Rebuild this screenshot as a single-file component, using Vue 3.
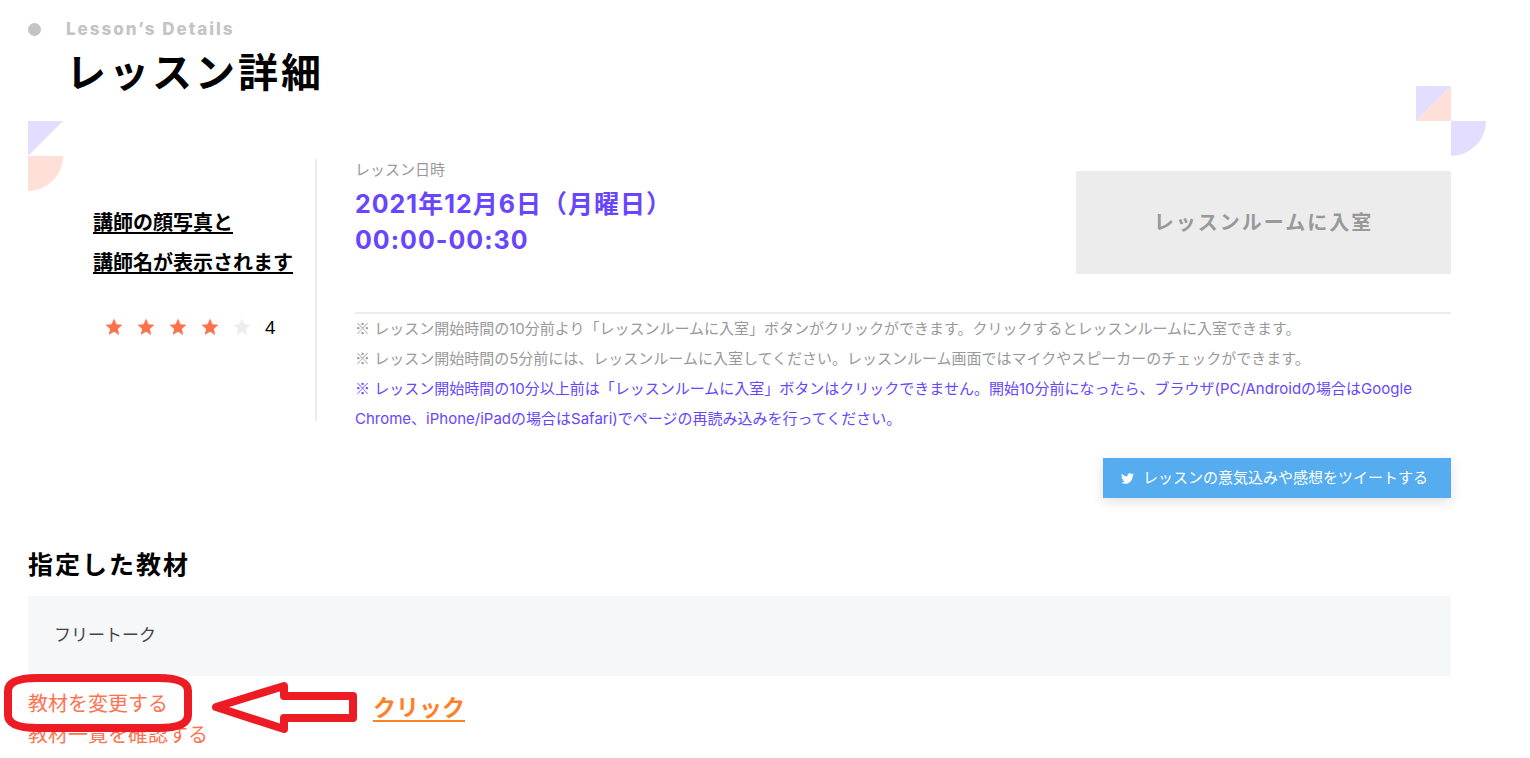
<script setup>
const notes = [
  { text: 'レッスン開始時間の10分前より「レッスンルームに入室」ボタンがクリックができます。クリックするとレッスンルームに入室できます。', strong: false },
  { text: 'レッスン開始時間の5分前には、レッスンルームに入室してください。レッスンルーム画面ではマイクやスピーカーのチェックができます。', strong: false },
  { text: 'レッスン開始時間の10分以上前は「レッスンルームに入室」ボタンはクリックできません。開始10分前になったら、ブラウザ(PC/Androidの場合はGoogle Chrome、iPhone/iPadの場合はSafari)でページの再読み込みを行ってください。', strong: true },
]
const rating = 4
</script>

<template>
  <main class="page">
    <header class="title">
      <span class="dot"></span>
      <div>
        <p class="eyebrow">Lesson’s Details</p>
        <h1>レッスン詳細</h1>
      </div>
    </header>

    <section class="lesson">
      <svg class="deco deco-left" viewBox="0 0 35 70" aria-hidden="true">
        <path d="M0 0H35L0 35Z" fill="#e3deff" />
        <path d="M0 35H35A35 35 0 0 1 0 70Z" fill="#ffe0d9" />
      </svg>
      <svg class="deco deco-right" viewBox="0 0 70 70" aria-hidden="true">
        <path d="M0 0H35L0 35Z" fill="#e3deff" />
        <path d="M35 0V35H0Z" fill="#ffe0d9" />
        <path d="M35 35H70A35 35 0 0 1 35 70Z" fill="#e3deff" />
      </svg>

      <div class="teacher">
        <p class="teacher-name">講師の顔写真と<br />講師名が表示されます</p>
        <div class="rating">
          <svg v-for="n in 5" :key="n" class="star" :class="{ off: n > rating }" viewBox="0 0 18 18" aria-hidden="true">
            <path d="M9 0.5L11.4 6.2L17.6 6.7L12.9 10.8L14.3 17L9 13.7L3.7 17L5.1 10.8L0.4 6.7L6.6 6.2Z" />
          </svg>
          <span class="score">{{ rating }}</span>
        </div>
      </div>

      <div class="detail">
        <div class="summary">
          <div>
            <p class="label">レッスン日時</p>
            <p class="date">2021年12月6日（月曜日）<br />00:00-00:30</p>
          </div>
          <button class="enter" type="button" disabled>レッスンルームに入室</button>
        </div>
        <div class="notes">
          <p v-for="note in notes" :key="note.text" :class="{ strong: note.strong }"><span class="mark">※</span> {{ note.text }}</p>
        </div>
      </div>
    </section>

    <div class="share">
      <a class="tweet" href="#">
        <svg viewBox="0 0 24 24" aria-hidden="true">
          <path d="M23.95 4.57a10 10 0 0 1-2.82.77 4.96 4.96 0 0 0 2.16-2.72c-.95.55-2 .95-3.13 1.18a4.92 4.92 0 0 0-8.38 4.48C7.69 8.1 4.07 6.13 1.64 3.16a4.82 4.82 0 0 0-.67 2.48c0 1.71.87 3.21 2.19 4.1a4.9 4.9 0 0 1-2.23-.62v.06a4.92 4.92 0 0 0 3.95 4.83 5 5 0 0 1-2.21.08 4.94 4.94 0 0 0 4.6 3.42A9.87 9.87 0 0 1 0 19.54a14 14 0 0 0 7.55 2.21c9.05 0 14-7.5 14-13.98 0-.21 0-.42-.02-.63a9.94 9.94 0 0 0 2.42-2.57z" />
        </svg>
        <span>レッスンの意気込みや感想をツイートする</span>
      </a>
    </div>

    <section>
      <h2>指定した教材</h2>
      <div class="material">フリートーク</div>
      <nav class="links">
        <a href="#">教材を変更する</a>
        <a href="#">教材一覧を確認する</a>
        <svg class="callout" viewBox="0 0 354 62" aria-hidden="true">
          <path d="M34 5Q4 5 4 18V42Q4 55 34 55H154Q184 55 184 42V18Q184 5 154 5Z" />
          <path d="M212 34L280 13V23H349V45H280V56Z" />
        </svg>
        <span class="click">クリック</span>
      </nav>
    </section>
  </main>
</template>

<style>
body {
  margin: 0;
  background: #fff;
}
</style>

<style scoped>
.page {
  padding: 16px 79px 0 28px;
  color: #000;
  font-family: Inter, "Noto Sans CJK JP", sans-serif;
}
p, h1, h2 {
  margin: 0;
}
.title {
  display: flex;
  gap: 25px;
}
.dot {
  width: 13px;
  height: 13px;
  margin-top: 7px;
  border-radius: 50%;
  background: #c4c4c4;
}
.eyebrow {
  color: #c4c4c4;
  font-size: 17px;
  font-weight: 800;
  line-height: 26px;
  letter-spacing: 2px;
}
h1 {
  font-size: 40px;
  font-weight: 700;
  line-height: 62px;
  letter-spacing: 3px;
}
.lesson {
  position: relative;
  display: flex;
  margin-top: 17px;
  padding-top: 38px;
}
.deco {
  position: absolute;
}
.deco-left {
  top: 0;
  left: 0;
  width: 35px;
}
.deco-right {
  top: -35px;
  right: -35px;
  width: 70px;
}
.teacher {
  flex: none;
  box-sizing: border-box;
  width: 289px;
  height: 262px;
  padding: 44px 0 0 65px;
  border-right: 2px solid #ececec;
}
.teacher-name {
  font-size: 20px;
  font-weight: 700;
  line-height: 40px;
  text-decoration: underline;
  text-decoration-thickness: 2px;
  text-underline-offset: 2px;
}
.rating {
  display: flex;
  align-items: center;
  gap: 14px;
  margin-top: 32px;
  padding-left: 12px;
}
.star {
  width: 18px;
  height: 18px;
  fill: #ff7250;
}
.star.off {
  fill: #ececec;
}
.score {
  font-family: "Noto Sans", sans-serif;
  font-size: 18px;
  line-height: 24px;
}
.detail {
  flex: 1;
  margin-left: 38px;
}
.summary {
  display: flex;
  justify-content: space-between;
  align-items: flex-start;
  box-sizing: border-box;
  min-height: 155px;
  border-bottom: 2px solid #ececec;
}
.label {
  color: #999;
  font-size: 15px;
  line-height: 22px;
}
.date {
  margin-top: 5px;
  color: #6845ff;
  font-size: 25px;
  font-weight: 700;
  line-height: 36px;
  letter-spacing: 1px;
}
.enter {
  width: 375px;
  height: 103px;
  margin-top: 12px;
  padding: 0 0 2px;
  border: 0;
  background: #ececec;
  color: #999;
  font-family: inherit;
  font-size: 20px;
  font-weight: 700;
  letter-spacing: 2px;
}
.notes {
  color: #999;
  font-size: 15px;
  line-height: 30px;
}
.notes .strong {
  color: #6845ff;
}
.mark {
  font-family: "Noto Sans CJK JP", sans-serif;
  line-height: 1;
}
.share {
  display: flex;
  justify-content: flex-end;
  margin-top: 24px;
}
.tweet {
  display: flex;
  align-items: center;
  gap: 9px;
  box-sizing: border-box;
  width: 348px;
  height: 40px;
  padding: 0 0 0 18px;
  background: #55acee;
  box-shadow: 0 4px 12px rgba(0, 0, 0, 0.12);
  color: #fff;
  font-size: 15px;
  line-height: 20px;
  text-decoration: none;
}
.tweet svg {
  width: 13px;
  height: 13px;
  fill: #fff;
}
h2 {
  margin-top: 48px;
  font-size: 25px;
  font-weight: 700;
  line-height: 38px;
  letter-spacing: 2px;
}
.material {
  margin-top: 12px;
  padding: 25px 26px 27px;
  background: #f6f7f9;
  color: #444;
  font-size: 17px;
  line-height: 28px;
}
.links {
  position: relative;
  display: flex;
  flex-direction: column;
  align-items: flex-start;
  padding-top: 13px;
}
.links a {
  color: #ff7250;
  font-size: 20px;
  line-height: 31px;
  text-decoration: none;
}
.callout {
  position: absolute;
  top: -3px;
  left: -24px;
  width: 354px;
  fill: none;
  stroke: #ed1c24;
  stroke-width: 8;
  stroke-linejoin: round;
}
.click {
  position: absolute;
  top: 15px;
  left: 345px;
  color: #ff7f27;
  font-size: 23px;
  font-weight: 700;
  line-height: 34px;
  text-decoration: underline;
  text-decoration-thickness: 2px;
  text-underline-offset: 4px;
}
</style>
